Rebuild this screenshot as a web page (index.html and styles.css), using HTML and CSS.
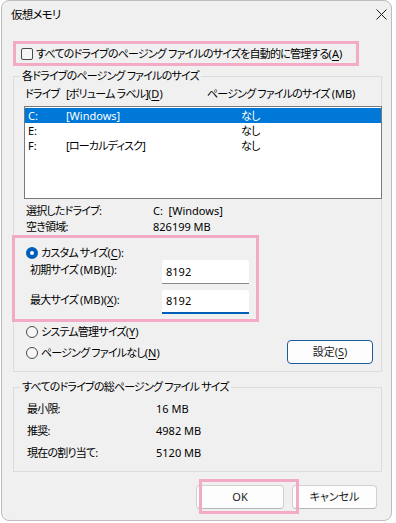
FILE: index.html
```html
<!DOCTYPE html>
<html lang="ja">
<head>
<meta charset="utf-8">
<title>仮想メモリ</title>
<link rel="stylesheet" href="styles.css">
</head>
<body>
<div class="window">
  <div class="titlebar">
    <span class="title">仮想メモリ</span>
    <svg class="close" width="11" height="11" viewBox="0 0 11 11"><path d="M0.5 0.5 L10.5 10.5 M10.5 0.5 L0.5 10.5" stroke="#1a1a1a" stroke-width="1" fill="none"/></svg>
  </div>
  <div class="content">
    <div class="check-row">
      <span class="checkbox"></span>
      <span>すべてのドライブのページング ファイルのサイズを自動的に管理する<span class="lat">(<u>A</u>)</span></span>
    </div>

    <fieldset class="group group-drives">
      <legend>各ドライブのページング ファイルのサイズ</legend>
      <div class="list-head">
        <span>ドライブ</span>
        <span>[ボリューム ラベル]<span class="lat">(<u>D</u>)</span></span>
        <span>ページング ファイルのサイズ <span class="lat">(MB)</span></span>
      </div>
      <div class="listbox">
        <div class="row selected"><span class="lat">C:</span><span class="lat">[Windows]</span><span>なし</span></div>
        <div class="row"><span class="lat">E:</span><span></span><span>なし</span></div>
        <div class="row"><span class="lat">F:</span><span>[ローカルディスク]</span><span>なし</span></div>
      </div>
      <div class="info">
        <span>選択したドライブ:</span><span class="lat">C:&nbsp;&nbsp;[Windows]</span>
        <span>空き領域:</span><span class="lat">826199 MB</span>
      </div>
      <div class="radio-row custom">
        <span class="radio on"></span>
        <span>カスタム サイズ<span class="lat">(<u>C</u>):</span></span>
      </div>
      <div class="size-row">
        <span class="size-label">初期サイズ <span class="lat">(MB)(<u>I</u>):</span></span>
        <div class="textbox lat">8192</div>
      </div>
      <div class="size-row second">
        <span class="size-label">最大サイズ <span class="lat">(MB)(<u>X</u>):</span></span>
        <div class="textbox focused lat">8192</div>
      </div>
      <div class="bottom-row">
        <div class="radios">
          <div class="radio-row"><span class="radio"></span><span>システム管理サイズ<span class="lat">(<u>Y</u>)</span></span></div>
          <div class="radio-row"><span class="radio"></span><span>ページング ファイルなし<span class="lat">(<u>N</u>)</span></span></div>
        </div>
        <button class="btn btn-set">設定<span class="lat">(<u>S</u>)</span></button>
      </div>
    </fieldset>

    <fieldset class="group group-total">
      <legend>すべてのドライブの総ページング ファイル サイズ</legend>
      <div class="totals">
        <span>最小限:</span><span class="lat">16 MB</span>
        <span>推奨:</span><span class="lat">4982 MB</span>
        <span>現在の割り当て:</span><span class="lat">5120 MB</span>
      </div>
    </fieldset>

    <div class="footer">
      <button class="btn btn-ok lat">OK</button>
      <button class="btn btn-cancel">キャンセル</button>
    </div>
  </div>

  <div class="mark mark-auto"></div>
  <div class="mark mark-custom"></div>
  <div class="mark mark-ok"></div>
</div>
</body>
</html>
```

FILE: styles.css
```css
* { box-sizing: border-box; }

html, body {
  margin: 0;
  padding: 0;
  background: #ffffff;
}

body {
  width: 396px;
  height: 523px;
  font-family: "Noto Sans", "Noto Sans CJK JP", sans-serif;
  font-size: 11px;
  font-weight: 400;
  line-height: 16px;
  letter-spacing: -0.8px;
  color: #000;
  font-feature-settings: "palt";
}

.lat { letter-spacing: 0; }

u { text-decoration: underline; text-underline-offset: 2px; }

.window {
  position: relative;
  margin-left: 1px;
  width: 391px;
  height: 521px;
  border: 1px solid #bdbdbd;
  border-radius: 8px;
  background: #f0f0f0;
}

.titlebar {
  height: 27px;
  display: flex;
  align-items: center;
  justify-content: space-between;
  padding-left: 9px;
  padding-right: 4px;
}

.title { line-height: 16px; font-size: 11.5px; }

.close { display: block; }

.content {
  padding-left: 11px;
  padding-right: 9px;
}

.check-row {
  margin-top: 18px;
  margin-left: 8px;
  height: 16px;
  display: flex;
  align-items: center;
  gap: 3px;
  white-space: nowrap;
}

.checkbox {
  width: 12px;
  height: 12px;
  border: 1px solid #4a4a4a;
  border-radius: 2px;
  background: #f6f6f6;
  flex: none;
}

.group {
  margin: 6px 0 0 0;
  padding: 0;
  min-width: 0;
  border: 1px solid #dcdcdc;
}

.group legend {
  margin-left: 6px;
  padding: 0 2px;
  line-height: 16px;
}

.list-head {
  margin-top: 2px;
  height: 16px;
  padding-left: 11px;
  display: grid;
  grid-template-columns: 41px 141px auto;
  white-space: nowrap;
}

.listbox {
  margin: 4px -1px 0 10px;
  height: 93px;
  border: 1px solid #7a7a7a;
  background: #fff;
  padding-top: 1px;
}

.row {
  height: 15px;
  line-height: 15px;
  padding-left: 3px;
  display: grid;
  grid-template-columns: 38px 175px auto;
  white-space: nowrap;
}

.row.selected {
  background: #0078d7;
  color: #fff;
}

.info {
  margin-top: 4px;
  padding-left: 12px;
  display: grid;
  grid-template-columns: 127px auto;
  grid-auto-rows: 16px;
}

.radio-row {
  height: 14px;
  display: flex;
  align-items: center;
  gap: 3px;
  margin-left: 12px;
  white-space: nowrap;
}

.radio-row.custom { margin-top: 11px; }

.radio {
  width: 12px;
  height: 12px;
  border-radius: 50%;
  border: 1px solid #4a4a4a;
  background: #f6f6f6;
  flex: none;
}

.radio.on {
  border: 4px solid #005fb8;
  background: #ffffff;
}

.size-row {
  display: flex;
  align-items: flex-start;
}

.size-row.second { margin-top: 6px; }

.size-label {
  width: 148px;
  padding-left: 16px;
  padding-top: 2px;
  white-space: nowrap;
}

.textbox {
  width: 87px;
  height: 24px;
  background: #fff;
  border-bottom: 1px solid #8a8a8a;
  border-radius: 3px 3px 0 0;
  padding-left: 4px;
  line-height: 23px;
}

.textbox.focused {
  border-bottom: 2px solid #005fb8;
  line-height: 22px;
}

.bottom-row {
  margin-top: 11px;
  padding-bottom: 7px;
  display: flex;
  justify-content: space-between;
  align-items: flex-start;
}

.radios {
  display: flex;
  flex-direction: column;
  gap: 7px;
}

.radios .radio-row { margin-left: 12px; }

.btn {
  font: inherit;
  font-weight: 400;
  color: #1a1a1a;
  height: 24px;
  padding: 0;
  background: #fdfdfd;
  border: 1px solid #d0d0d0;
  border-bottom-color: #b8b8b8;
  border-radius: 4px;
  line-height: 20px;
}

.btn.lat { letter-spacing: 0; }

.btn-set {
  width: 86px;
  margin-top: 15px;
  margin-right: 8px;
  border: 1px solid #1e5a9e;
}

.group-total { margin-top: 7px; }

.totals {
  margin-top: 6px;
  padding-left: 13px;
  padding-bottom: 10px;
  display: grid;
  grid-template-columns: 129px auto;
  grid-auto-rows: 16px;
  row-gap: 6px;
}

.footer {
  margin-top: 13px;
  display: flex;
  justify-content: flex-end;
  gap: 8px;
  padding-right: 5px;
}

.btn-ok { width: 88px; }
.btn-cancel { width: 85px; }

.mark {
  position: absolute;
  border: 3px solid #f3aac7;
  pointer-events: none;
}

.mark-auto { left: 11px; top: 40px; width: 346px; height: 25px; }
.mark-custom { left: 10px; top: 234px; width: 247px; height: 87px; }
.mark-ok { left: 197px; top: 478px; width: 100px; height: 35px; }
```
